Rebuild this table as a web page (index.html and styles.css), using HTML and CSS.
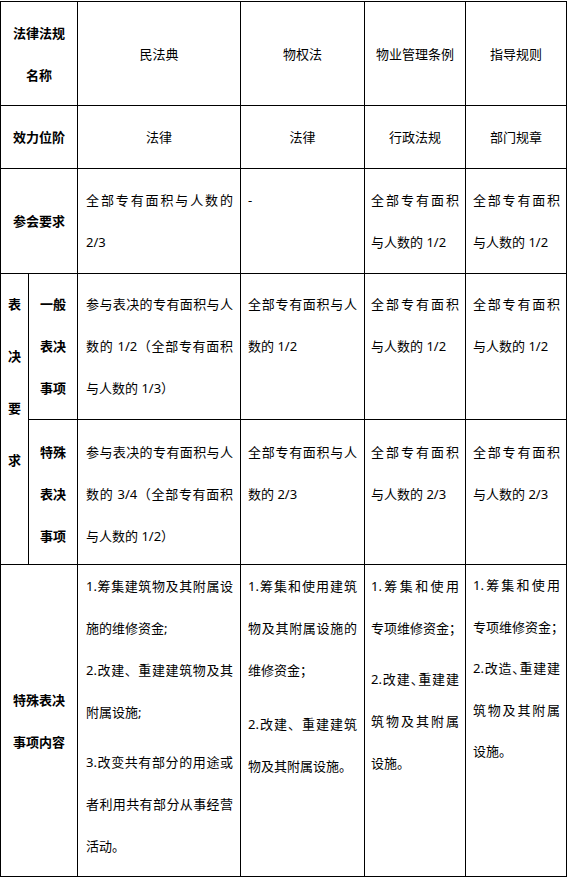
FILE: index.html
```html
<!DOCTYPE html>
<html lang="zh-CN">
<head>
<meta charset="utf-8">
<title>法律法规对比</title>
<link rel="stylesheet" href="styles.css">
</head>
<body>
<div class="table" role="table">
  <div class="cell center label span2">法律法规<br>名称</div>
  <div class="cell center">民法典</div>
  <div class="cell center">物权法</div>
  <div class="cell center">物业管理条例</div>
  <div class="cell center">指导规则</div>

  <div class="cell center label span2">效力位阶</div>
  <div class="cell center">法律</div>
  <div class="cell center">法律</div>
  <div class="cell center">行政法规</div>
  <div class="cell center">部门规章</div>

  <div class="cell center label span2">参会要求</div>
  <div class="cell body c3 r3">全部专有面积与人数的 2/3</div>
  <div class="cell body c4 r3">-</div>
  <div class="cell body c5 r3">全部专有面积与人数的 1/2</div>
  <div class="cell body c6 r3">全部专有面积与人数的 1/2</div>

  <div class="cell vert label">表<br>决<br>要<br>求</div>
  <div class="cell sub label r4">一般<br>表决<br>事项</div>
  <div class="cell body c3 r4">参与表决的专有面积与人数的 1/2（全部专有面积与人数的 1/3）</div>
  <div class="cell body c4 r4">全部专有面积与人数的 1/2</div>
  <div class="cell body c5 r4">全部专有面积与人数的 1/2</div>
  <div class="cell body c6 r4">全部专有面积与人数的 1/2</div>

  <div class="cell sub label r5">特殊<br>表决<br>事项</div>
  <div class="cell body c3 r5">参与表决的专有面积与人数的 3/4（全部专有面积与人数的 1/2）</div>
  <div class="cell body c4 r5">全部专有面积与人数的 2/3</div>
  <div class="cell body c5 r5">全部专有面积与人数的 2/3</div>
  <div class="cell body c6 r5">全部专有面积与人数的 2/3</div>

  <div class="cell center label span2">特殊表决<br>事项内容</div>
  <div class="cell body c3 r6">
    <p>1.筹集建筑物及其附属设施的维修资金;</p>
    <p>2.改建、重建建筑物及其附属设施;</p>
    <p class="gap8">3.改变共有部分的用途或者利用共有部分从事经营活动。</p>
  </div>
  <div class="cell body c4 r6">
    <p>1.筹集和使用建筑物及其附属设施的维修资金；</p>
    <p class="gap12">2.改建、重建建筑物及其附属设施。</p>
  </div>
  <div class="cell body c5 r6">
    <p>1.筹集和使用专项维修资金<span class="half">；</span></p>
    <p class="gap9">2.改建<span class="half">、</span>重建建筑物及其附属设施。</p>
  </div>
  <div class="cell body c6 r6 tight">
    <p>1.筹集和使用专项维修资金<span class="half">；</span></p>
    <p>2.改造<span class="half">、</span>重建建筑物及其附属设施。</p>
  </div>
</div>
</body>
</html>
```

FILE: styles.css
```css
html, body {
  margin: 0;
  padding: 0;
  background: #fff;
}

body {
  font-family: "Noto Sans", "Noto Sans CJK SC", sans-serif;
  font-size: 13px;
  color: #000;
}

.table {
  display: grid;
  grid-template-columns: 27px 48px 162px 123px 100px 100px;
  grid-template-rows: 103px 62px 104px 145px 144px 311px;
  gap: 1px;
  padding: 1px;
  margin-top: 1px;
  width: max-content;
  background: #000;
}

.cell {
  background: #fff;
  line-height: 42px;
}

.span2 {
  grid-column: span 2;
}

.center {
  display: flex;
  align-items: center;
  justify-content: center;
  text-align: center;
}

.label {
  font-weight: 700;
}

.vert {
  grid-row: span 2;
  text-align: center;
  line-height: 52px;
  padding-top: 4px;
}

.sub {
  text-align: center;
}

.body {
  text-align: justify;
}

.body p {
  margin: 0;
}

.c3 { padding-left: 8px; padding-right: 7px; }
.c4 { padding-left: 7px; padding-right: 7px; }
.c5 { padding-left: 6px; padding-right: 6px; }
.c6 { padding-left: 7px; padding-right: 6px; }

.r3 { padding-top: 10px; }
.r4 { padding-top: 9px; }
.r5 { padding-top: 11px; }
.r6 { padding-top: 0; }

.gap8 { margin-top: 8px !important; }
.gap9 { margin-top: 9px !important; }
.gap12 { margin-top: 12px !important; }

.tight {
  line-height: 41.5px;
}

.half {
  font-feature-settings: "halt" 1;
}
```
